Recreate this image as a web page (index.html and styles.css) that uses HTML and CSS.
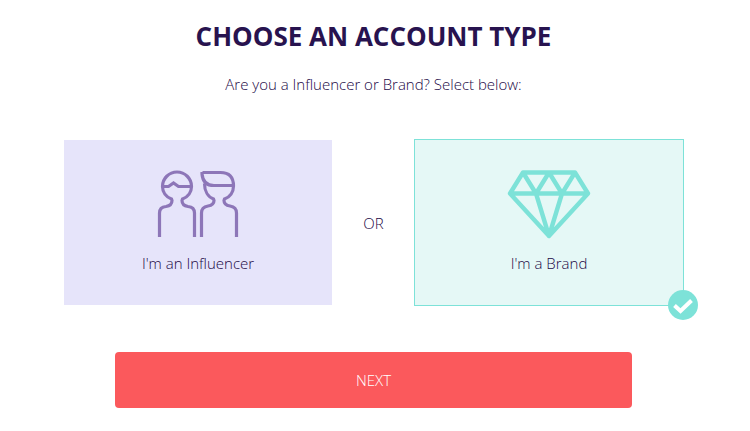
FILE: index.html
```html
<!DOCTYPE html>
<html lang="en">
<head>
<meta charset="utf-8">
<meta name="viewport" content="width=device-width, initial-scale=1">
<title>Choose an account type</title>
<link rel="stylesheet" href="styles.css">
</head>
<body>
<main class="page">
  <h1 class="title">CHOOSE AN ACCOUNT TYPE</h1>
  <p class="subtitle" id="prompt">Are you a Influencer or Brand? Select below:</p>
  <form class="form">
    <div class="choices" role="radiogroup" aria-labelledby="prompt">
      <label class="card card-influencer">
        <input class="card-input" type="radio" name="account" value="influencer">
        <svg class="card-icon" viewBox="0 0 84 70" fill="none" stroke="currentColor" stroke-width="3.2" aria-hidden="true">
          <path d="M3.500 68V44Q3.500 38 10 37.500Q16 36.500 16 31.500L15.500 30C10 28 6.500 23 6.500 17.500A14.500 14.500 0 0 1 35.500 17.500C35.500 23 32 28 26.500 30L26 31.500Q26 36.500 32 37.500Q38.500 38 38.500 44V68"/>
          <path d="M7 17.500H12.500L17.500 14L22.500 17.500H35.500"/>
          <path d="M45.500 68V44Q45.500 38 52 37Q58 36 58 31.500L57.500 30C52 28 48.500 22 48.500 14.500M46.500 3.500H64.500Q77.500 3.500 77.500 17C77.500 23 74 28 68.500 30L68 31.500Q68 36 74 37Q80.500 38 80.500 44V68"/>
          <path d="M46 3V5Q47 16.500 58 16.500H77.500"/>
        </svg>
        <span class="card-label">I'm an Influencer</span>
      </label>
      <span class="or">OR</span>
      <label class="card card-brand">
        <input class="card-input" type="radio" name="account" value="brand" checked>
        <svg class="card-icon" viewBox="0 0 84 70" fill="none" stroke="currentColor" stroke-width="4.4" stroke-linejoin="round" aria-hidden="true">
          <path d="M16 3.500H68L81 24.500L42 67L3 24.500ZM3 24.500H81M16 3.500L29 24.500L42 3.500L55 24.500L68 3.500M29 24.500L42 67L55 24.500"/>
          <path d="M38 59H46L44 67H40Z" fill="currentColor" stroke="none"/>
        </svg>
        <span class="card-label">I'm a Brand</span>
        <svg class="badge" viewBox="0 0 30 30" aria-hidden="true">
          <circle class="badge-disc" cx="15" cy="15" r="15"/>
          <path class="badge-tick" d="M6.500 15.500L12.500 21L23.500 10.500"/>
        </svg>
      </label>
    </div>
    <button class="next" type="button">NEXT</button>
  </form>
</main>
</body>
</html>
```
FILE: styles.css
```css
* {
  box-sizing: border-box;
}

body {
  margin: 0;
  background: #fff;
  color: #1c0846;
  font: 350 15px/20px "Open Sans", "Noto Sans", sans-serif;
}

.page {
  padding: 18px 66px 24px 63px;
  text-align: center;
}

.title {
  margin: 0;
  color: #28134f;
  font-size: 26px;
  font-weight: 700;
  line-height: 36px;
}

.subtitle {
  margin: 20px 0 45px;
}

.choices {
  display: grid;
  grid-template-columns: 1fr 81px 1fr;
  align-items: center;
}

.card {
  position: relative;
  display: flex;
  flex-direction: column;
  align-items: center;
  gap: 14px;
  padding: 29px 0 32px;
  border: 1px solid transparent;
  background-clip: padding-box;
  cursor: pointer;
}

.card-influencer {
  background-color: #e6e4fa;
}

.card-brand {
  border-color: #7de2d8;
  background-color: #e5f8f6;
}

.card-input {
  position: absolute;
  inset: 0;
  margin: 0;
  opacity: 0;
}

.card-icon {
  width: 84px;
  height: 70px;
}

.card-influencer .card-icon {
  color: #8d76b8;
}

.card-brand .card-icon {
  color: #7de2d8;
}

.badge {
  position: absolute;
  right: -15px;
  bottom: -15px;
  width: 30px;
  height: 30px;
}

.badge-disc {
  fill: #7de2d8;
}

.badge-tick {
  fill: none;
  stroke: #fff;
  stroke-width: 4;
}

.next {
  display: block;
  width: calc(100% - 104px);
  margin: 46px auto 0;
  padding: 18px;
  border: 0;
  border-radius: 4px;
  background: #fb595c;
  color: #fff;
  font: inherit;
  cursor: pointer;
}
```
